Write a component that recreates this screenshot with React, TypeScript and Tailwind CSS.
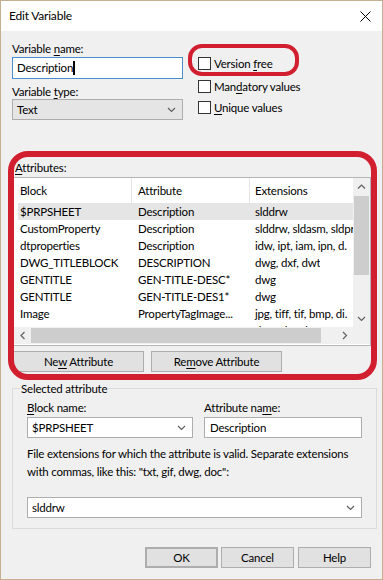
import React from "react";

const rows: [string, string, string][] = [
  ["$PRPSHEET", "Description", "slddrw"],
  ["CustomProperty", "Description", "slddrw, sldasm, sldprt"],
  ["dtproperties", "Description", "idw, ipt, iam, ipn, d."],
  ["DWG_TITLEBLOCK", "DESCRIPTION", "dwg, dxf, dwt"],
  ["GENTITLE", "GEN-TITLE-DESC*", "dwg"],
  ["GENTITLE", "GEN-TITLE-DES1*", "dwg"],
  ["Image", "PropertyTagImage...", "jpg, tiff, tif, bmp, di."],
  ["INVENTOR_TITLE", "TITLE", "dwg, dxf, dwt"],
];

function Chevron({ dir = "down" }: { dir?: "down" | "up" | "left" | "right" }) {
  const pts = {
    down: "1,1 4.5,4.5 8,1",
    up: "1,4.5 4.5,1 8,4.5",
    left: "4.5,1 1,4.5 4.5,8",
    right: "1,1 4.5,4.5 1,8",
  }[dir];
  const vertical = dir === "left" || dir === "right";
  return (
    <svg width={vertical ? 6 : 9} height={vertical ? 9 : 6} viewBox={vertical ? "0 0 6 9" : "0 0 9 6"}>
      <polyline points={pts} fill="none" stroke="#606060" strokeWidth="1.2" />
    </svg>
  );
}

function Check({ children, className = "" }: { children: React.ReactNode; className?: string }) {
  return (
    <div className={`flex h-[13px] items-center gap-[3px] ${className}`}>
      <span className="h-[13px] w-[13px] border border-[#333333] bg-white" />
      <span className="leading-[15px]">{children}</span>
    </div>
  );
}

function Btn({ children, className = "" }: { children: React.ReactNode; className?: string }) {
  return (
    <div
      className={`flex h-[21px] items-center justify-center border border-[#adadad] bg-[#e1e1e1] ${className}`}
    >
      <span>{children}</span>
    </div>
  );
}

export default function App() {
  return (
    <div className="relative flex h-[580px] w-[383px] flex-col overflow-hidden border border-[#c2b08f] bg-[#f0f0f0] font-['Lato','Noto_Sans',sans-serif] text-[11.5px] tracking-[-0.2px] text-black">
      <div className="flex h-[30px] shrink-0 items-center justify-between bg-white pl-[8px] pr-[11px]">
        <span className="text-[12px]">Edit Variable</span>
        <svg width="11" height="11" viewBox="0 0 11 11">
          <path d="M0.5 0.5 L10.5 10.5 M10.5 0.5 L0.5 10.5" stroke="#000" strokeWidth="1" />
        </svg>
      </div>

      <div className="flex flex-col px-[11px]">
        <div className="flex">
          <div className="flex w-[171px] flex-col pt-[10px]">
            <span className="leading-[15px]">
              Variable <u className="underline-offset-2">n</u>ame:
            </span>
            <div className="mt-[1px] flex h-[22px] items-center border border-[#4a90d0] bg-white px-[4px]">
              <span>Description</span>
              <span className="h-[14px] w-[2px] bg-black" />
            </div>
            <span className="mt-[5px] leading-[15px]">
              Variable <u className="underline-offset-2">t</u>ype:
            </span>
            <div className="flex h-[21px] items-center justify-between border border-[#adadad] bg-[#e5e5e5] pl-[4px] pr-[6px]">
              <span>Text</span>
              <Chevron />
            </div>
          </div>

          <div className="ml-[15px] flex flex-col pt-[26px]">
            <Check>
              Version <u className="underline-offset-2">f</u>ree
            </Check>
            <Check className="mt-[10px]">
              Man<u className="underline-offset-2">d</u>atory values
            </Check>
            <Check className="mt-[8px]">
              <u className="underline-offset-2">U</u>nique values
            </Check>
          </div>
        </div>

        <span className="mt-[40px] pl-[3px] leading-[15px]">
          <u className="underline-offset-2">A</u>ttributes:
        </span>

        <div className="ml-[1px] mt-[2px] flex h-[169px] w-[358px] flex-col border border-[#b5b5b5] bg-white">
          <div className="flex h-[149px]">
            <div className="flex min-w-0 flex-1 flex-col overflow-hidden">
              <div className="flex h-[25px] shrink-0 items-center">
                <div className="w-[117px] pl-[6px]">Block</div>
                <div className="h-full w-px bg-[#e5e5e5]" />
                <div className="w-[117px] pl-[6px]">Attribute</div>
                <div className="h-full w-px bg-[#e5e5e5]" />
                <div className="pl-[5px]">Extensions</div>
              </div>
              {rows.map((r, i) => (
                <div
                  key={i}
                  className={`ml-[4px] flex h-[17px] shrink-0 items-center whitespace-nowrap ${i === 0 ? "bg-[#e5e5e5]" : ""}`}
                >
                  <div className="w-[113px] shrink-0 overflow-hidden pl-[2px]">{r[0]}</div>
                  <div className="w-[118px] shrink-0 overflow-hidden pl-[7px]">{r[1]}</div>
                  <div className="overflow-hidden pl-[6px]">{r[2]}</div>
                </div>
              ))}
            </div>
            <div className="flex w-[17px] shrink-0 flex-col bg-[#f0f0f0]">
              <div className="flex h-[17px] items-center justify-center">
                <Chevron dir="up" />
              </div>
              <div className="mx-[1px] mt-[1px] h-[79px] bg-[#cdcdcd]" />
              <div className="flex-1" />
              <div className="flex h-[17px] items-center justify-center">
                <Chevron dir="down" />
              </div>
            </div>
          </div>
          <div className="flex h-[17px] bg-[#f0f0f0]">
            <div className="flex w-[17px] items-center justify-center">
              <Chevron dir="left" />
            </div>
            <div className="my-[1px] w-[290px] bg-[#cdcdcd]" />
            <div className="flex-1" />
            <div className="flex w-[17px] items-center justify-center">
              <Chevron dir="right" />
            </div>
            <div className="w-[17px]" />
          </div>
        </div>

        <div className="ml-[1px] mt-[5px] flex gap-[7px]">
          <Btn className="w-[131px]">
            Ne<u className="underline-offset-2">w</u> Attribute
          </Btn>
          <Btn className="w-[131px]">
            Re<u className="underline-offset-2">m</u>ove Attribute
          </Btn>
        </div>

        <fieldset className="mt-[9px] border border-[#dcdcdc] px-[14px] pb-[10px]">
          <legend className="-ml-[7px] px-[1px] leading-[15px]">Selected attribute</legend>
          <div className="mt-[4px] flex gap-[11px]">
            <div className="flex w-[166px] flex-col">
              <span className="leading-[15px]">
                <u className="underline-offset-2">B</u>lock name:
              </span>
              <div className="mt-[2px] flex h-[21px] items-center justify-between border border-[#adadad] bg-white pl-[4px] pr-[6px]">
                <span>$PRPSHEET</span>
                <Chevron />
              </div>
            </div>
            <div className="flex w-[158px] flex-col">
              <span className="leading-[15px]">
                Attribute na<u className="underline-offset-2">m</u>e:
              </span>
              <div className="mt-[2px] flex h-[21px] items-center border border-[#adadad] bg-white pl-[5px]">
                <span>Description</span>
              </div>
            </div>
          </div>
          <p className="mt-[7px] leading-[18px]">
            File extensions for which the attribute is valid. Separate extensions with commas, like this:
            "txt, gif, dwg, doc":
          </p>
          <div className="mt-[16px] flex h-[21px] items-center justify-between border border-[#adadad] bg-white pl-[4px] pr-[6px]">
            <span>slddrw</span>
            <Chevron />
          </div>
        </fieldset>

        <div className="mt-[18px] flex justify-end">
          <Btn className="w-[73px] border-2 border-[#2f7bc4]">OK</Btn>
          <Btn className="ml-[3px] w-[73px]">Cancel</Btn>
          <Btn className="ml-[4px] w-[73px]">Help</Btn>
        </div>
      </div>

      <div className="pointer-events-none absolute left-[187px] top-[43px] h-[32px] w-[111px] rounded-[14px] border-[4px] border-[#d21f30]" />
      <div className="pointer-events-none absolute left-[7px] top-[150px] h-[229px] w-[369px] rounded-[20px] border-[6px] border-[#d21f30]" />
    </div>
  );
}
